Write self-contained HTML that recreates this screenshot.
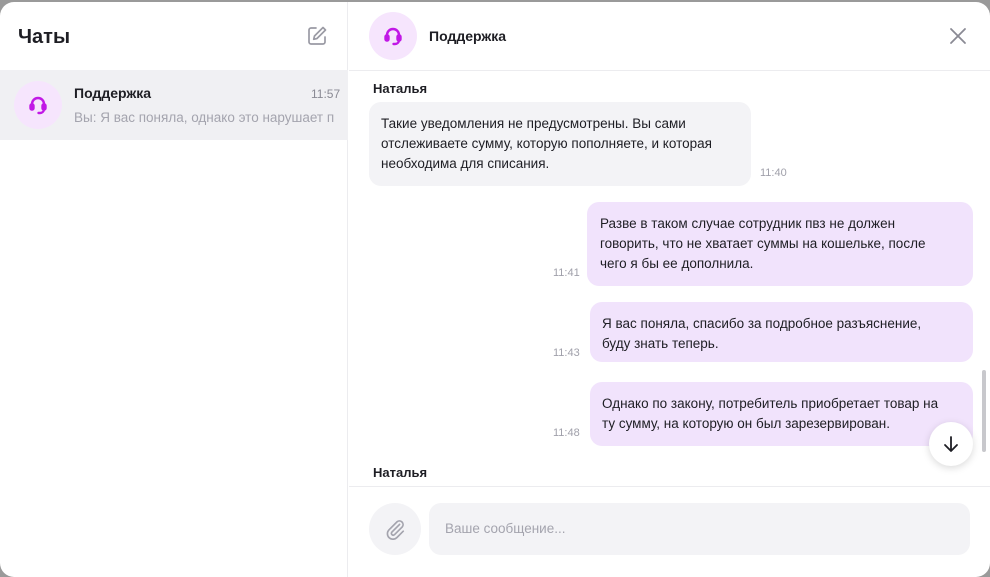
<!DOCTYPE html>
<html><head><meta charset="utf-8"><style>
*{margin:0;padding:0;box-sizing:border-box}
html,body{width:990px;height:571px;background:#9a9a9a;overflow:hidden;font-family:"Liberation Sans","DejaVu Sans",sans-serif;color:#1e1e24}
.win{position:absolute;left:0;top:2px;width:990px;height:575px;background:#fff;border-radius:14px;overflow:hidden}
.left{position:absolute;left:0;top:0;width:348px;height:100%;border-right:1px solid #ececef}
.abs{position:absolute}
.av{position:absolute;width:48px;height:48px;border-radius:50%;background:#f6e5fd}
.av svg{position:absolute;left:12px;top:12px}
.b{font-weight:bold}
.bub{position:absolute;border-radius:12px;font-size:13.5px;line-height:20px;padding:12px 12px;white-space:nowrap}
.in{background:#f3f3f6}
.out{background:#f1e3fc}
.t{position:absolute;font-size:11px;color:#a0a0aa}
.nm{position:absolute;font-size:13px;font-weight:bold}
</style></head><body>
<div class="win">
<div class="left">
 <div class="abs b" style="left:18px;top:24px;font-size:20px">Чаты</div>
 <svg class="abs" style="left:306px;top:23px" width="22" height="22" viewBox="0 0 22 22" fill="none" stroke="#9a9aa4" stroke-width="1.7" stroke-linecap="round" stroke-linejoin="round"><path d="M10 3H5a2 2 0 0 0-2 2v12a2 2 0 0 0 2 2h12a2 2 0 0 0 2-2v-5"/><path d="M17 2.5l2.5 2.5L11 13.5l-3.3.8.8-3.3z"/></svg>
 <div class="abs" style="left:0;top:68px;width:348px;height:70px;background:#f0f0f3"></div>
 <div class="av" style="left:14px;top:79px"><svg width="24" height="24" viewBox="0 0 24 24" fill="none" stroke="#c118e6" stroke-width="2.4" stroke-linecap="round"><path d="M6 13V11a6 6 0 0 1 12 0v2"/><rect x="4.5" y="11.5" width="3" height="5" rx="1.2" fill="#c118e6"/><rect x="16.5" y="11.5" width="3" height="5" rx="1.2" fill="#c118e6"/><path d="M18 16.5a4 4 0 0 1-4 3.5h-1.5"/></svg></div>
 <div class="abs b" style="left:74px;top:83px;font-size:14px">Поддержка</div>
 <div class="abs" style="left:311px;top:85px;font-size:12px;color:#8a8a94">11:57</div>
 <div class="abs" style="left:74px;top:108px;font-size:13.5px;color:#a4a4ae;white-space:nowrap;width:262px;overflow:hidden">Вы: Я вас поняла, однако это нарушает п</div>
</div>
<div class="av" style="left:369px;top:10px"><svg width="24" height="24" viewBox="0 0 24 24" fill="none" stroke="#c118e6" stroke-width="2.4" stroke-linecap="round"><path d="M6 13V11a6 6 0 0 1 12 0v2"/><rect x="4.5" y="11.5" width="3" height="5" rx="1.2" fill="#c118e6"/><rect x="16.5" y="11.5" width="3" height="5" rx="1.2" fill="#c118e6"/><path d="M18 16.5a4 4 0 0 1-4 3.5h-1.5"/></svg></div>
<div class="abs b" style="left:429px;top:26px;font-size:14px">Поддержка</div>
<svg class="abs" style="left:949px;top:25px" width="18" height="18" viewBox="0 0 18 18" stroke="#8a8a94" stroke-width="1.8" stroke-linecap="round"><path d="M2 2l14 14M16 2L2 16"/></svg>
<div class="abs" style="left:349px;top:68px;width:641px;height:1px;background:#ececef"></div>
<div class="nm" style="left:373px;top:79px">Наталья</div>
<div class="bub in" style="left:369px;top:100px;width:382px;height:84px">Такие уведомления не предусмотрены. Вы сами<br>отслеживаете сумму, которую пополняете, и которая<br>необходима для списания.</div>
<div class="t" style="left:760px;top:165px">11:40</div>
<div class="bub out" style="left:587px;top:200px;width:386px;height:84px;padding-left:13px">Разве в таком случае сотрудник пвз не должен<br>говорить, что не хватает суммы на кошельке, после<br>чего я бы ее дополнила.</div>
<div class="t" style="left:553px;top:265px">11:41</div>
<div class="bub out" style="left:590px;top:300px;width:383px;height:60px">Я вас поняла, спасибо за подробное разъяснение,<br>буду знать теперь.</div>
<div class="t" style="left:553px;top:345px">11:43</div>
<div class="bub out" style="left:590px;top:380px;width:383px;height:64px">Однако по закону, потребитель приобретает товар на<br>ту сумму, на которую он был зарезервирован.</div>
<div class="t" style="left:553px;top:425px">11:48</div>
<div class="abs" style="left:982px;top:368px;width:4px;height:82px;border-radius:2px;background:#c8c8cc"></div>
<div class="abs" style="left:929px;top:420px;width:44px;height:44px;border-radius:50%;background:#fff;box-shadow:0 2px 8px rgba(0,0,0,.15)"></div>
<svg class="abs" style="left:941px;top:432px" width="20" height="20" viewBox="0 0 20 20" fill="none" stroke="#1e1e24" stroke-width="1.8" stroke-linecap="round" stroke-linejoin="round"><path d="M10 3v14M4 11l6 6 6-6"/></svg>
<div class="nm" style="left:373px;top:463px">Наталья</div>
<div class="abs" style="left:349px;top:484px;width:641px;height:1px;background:#ececef"></div>
<div class="abs" style="left:369px;top:501px;width:52px;height:52px;border-radius:50%;background:#f3f3f6"></div>
<svg class="abs" style="left:384px;top:516px" width="22" height="22" viewBox="0 0 24 24" fill="none" stroke="#a4a4ae" stroke-width="1.8" stroke-linecap="round"><path d="M17 7l-8.5 8.5a2 2 0 0 0 2.8 2.8L20 9.6a4 4 0 0 0-5.6-5.6L5.5 12.9a6 6 0 0 0 8.5 8.5L21 14.4"/></svg>
<div class="abs" style="left:429px;top:501px;width:541px;height:52px;border-radius:12px;background:#f3f3f6"></div>
<div class="abs" style="left:445px;top:519px;font-size:13.5px;color:#a4a4ae">Ваше сообщение...</div>
</div>
</body></html>
